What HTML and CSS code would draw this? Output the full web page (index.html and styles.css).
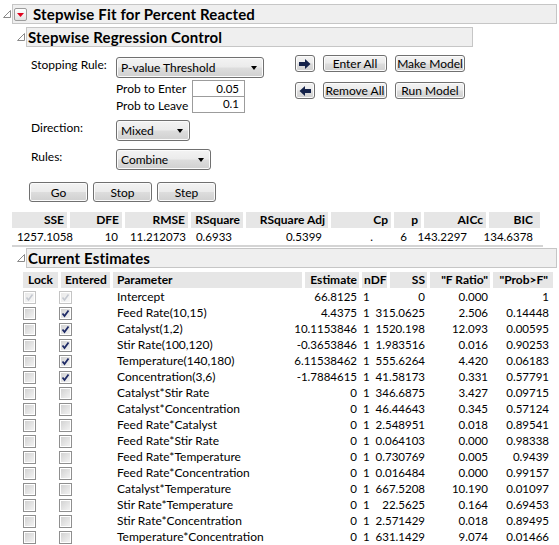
FILE: index.html
```html
<!DOCTYPE html>
<html>
<head>
<meta charset="utf-8">
<link rel="stylesheet" href="styles.css">
</head>
<body>
<div class="outline top">
  <div class="ohead">
    <svg class="tri" viewBox="0 0 8 8" width="8" height="8"><polygon points="0.5,7.5 7.5,7.5 7.5,0.5" fill="#fff" stroke="#8a8a8a" stroke-width="1"/></svg>
    <div class="obar title-bar">
      <span class="redbtn"><svg viewBox="0 0 13 13" width="13" height="13"><polygon points="3,5 10,5 6.5,9" fill="#e0001b"/></svg></span>
      <span class="otitle">Stepwise Fit for Percent Reacted</span>
    </div>
  </div>

  <div class="outline sub">
    <div class="ohead">
      <svg class="tri" viewBox="0 0 8 8" width="8" height="8"><polygon points="0.5,7.5 7.5,7.5 7.5,0.5" fill="#fff" stroke="#8a8a8a" stroke-width="1"/></svg>
      <div class="obar ctl-bar"><span class="otitle">Stepwise Regression Control</span></div>
    </div>
    <div class="control">
      <div class="ctl-left">
        <div class="crow">
          <span class="clabel">Stopping Rule:</span>
          <div class="combo c-stop">P-value Threshold<span class="carrow"></span></div>
        </div>
        <div class="probs">
          <span class="plabel">Prob to Enter</span><span class="pval">0.05</span>
          <span class="plabel">Prob to Leave</span><span class="pval second">0.1</span>
        </div>
        <div class="crow dir">
          <span class="clabel">Direction:</span>
          <div class="combo c-dir">Mixed<span class="carrow"></span></div>
        </div>
        <div class="crow rules">
          <span class="clabel">Rules:</span>
          <div class="combo c-rules">Combine<span class="carrow"></span></div>
        </div>
        <div class="btnrow">
          <div class="btn b-run">Go</div>
          <div class="btn b-run">Stop</div>
          <div class="btn b-run">Step</div>
        </div>
      </div>
      <div class="ctl-right">
        <div class="btn"><svg viewBox="0 0 12 10" width="12" height="10"><polygon points="0,3 6,3 6,0 11.5,5 6,10 6,7 0,7" fill="#14224a"/></svg></div>
        <div class="btn">Enter All</div>
        <div class="btn">Make Model</div>
        <div class="btn"><svg viewBox="0 0 12 10" width="12" height="10"><polygon points="12,3 6,3 6,0 0.5,5 6,10 6,7 12,7" fill="#14224a"/></svg></div>
        <div class="btn">Remove All</div>
        <div class="btn">Run Model</div>
      </div>
    </div>
  </div>

  <div class="stats">
    <div class="stats-head">
      <span>SSE</span><span>DFE</span><span>RMSE</span><span>RSquare</span><span>RSquare Adj</span><span>Cp</span><span>p</span><span>AICc</span><span class="last">BIC</span>
    </div>
    <div class="stats-vals">
      <span>1257.1058</span><span>10</span><span>11.212073</span><span>0.6933</span><span>0.5399</span><span>.</span><span>6</span><span>143.2297</span><span>134.6378</span>
    </div>
  </div>

  <div class="outline sub est">
    <div class="ohead">
      <svg class="tri" viewBox="0 0 8 8" width="8" height="8"><polygon points="0.5,7.5 7.5,7.5 7.5,0.5" fill="#fff" stroke="#8a8a8a" stroke-width="1"/></svg>
      <div class="obar est-bar"><span class="otitle">Current Estimates</span></div>
    </div>
    <div class="etable">
      <div class="ehead">
        <span class="h-lock">Lock</span><span class="h-ent">Entered</span><span class="h-par">Parameter</span><span class="h-r">Estimate</span><span class="h-ndf">nDF</span><span class="h-r">SS</span><span class="h-r">"F Ratio"</span><span class="h-r h-last">"Prob&gt;F"</span>
      </div>
      <div class="erow"><span class="cb dis"><svg viewBox="0 0 11 11" width="11" height="11"><path d="M2.5 5.5 L4.5 8 L8.5 2.5" fill="none" stroke="#c4c8d0" stroke-width="1.6"/></svg></span><span class="cb dis"><svg viewBox="0 0 11 11" width="11" height="11"><path d="M2.5 5.5 L4.5 8 L8.5 2.5" fill="none" stroke="#c4c8d0" stroke-width="1.6"/></svg></span><span class="par">Intercept</span><span class="num">66.8125</span><span class="ndf">1</span><span class="num">0</span><span class="num">0.000</span><span class="num">1</span></div>
      <div class="erow"><span class="cb"></span><span class="cb"><svg viewBox="0 0 11 11" width="11" height="11"><path d="M2.5 5.5 L4.5 8 L8.5 2.5" fill="none" stroke="#1e2a66" stroke-width="1.8"/></svg></span><span class="par">Feed Rate(10,15)</span><span class="num">4.4375</span><span class="ndf">1</span><span class="num">315.0625</span><span class="num">2.506</span><span class="num">0.14448</span></div>
      <div class="erow"><span class="cb"></span><span class="cb"><svg viewBox="0 0 11 11" width="11" height="11"><path d="M2.5 5.5 L4.5 8 L8.5 2.5" fill="none" stroke="#1e2a66" stroke-width="1.8"/></svg></span><span class="par">Catalyst(1,2)</span><span class="num">10.1153846</span><span class="ndf">1</span><span class="num">1520.198</span><span class="num">12.093</span><span class="num">0.00595</span></div>
      <div class="erow"><span class="cb"></span><span class="cb"><svg viewBox="0 0 11 11" width="11" height="11"><path d="M2.5 5.5 L4.5 8 L8.5 2.5" fill="none" stroke="#1e2a66" stroke-width="1.8"/></svg></span><span class="par">Stir Rate(100,120)</span><span class="num">-0.3653846</span><span class="ndf">1</span><span class="num">1.983516</span><span class="num">0.016</span><span class="num">0.90253</span></div>
      <div class="erow"><span class="cb"></span><span class="cb"><svg viewBox="0 0 11 11" width="11" height="11"><path d="M2.5 5.5 L4.5 8 L8.5 2.5" fill="none" stroke="#1e2a66" stroke-width="1.8"/></svg></span><span class="par">Temperature(140,180)</span><span class="num">6.11538462</span><span class="ndf">1</span><span class="num">555.6264</span><span class="num">4.420</span><span class="num">0.06183</span></div>
      <div class="erow"><span class="cb"></span><span class="cb"><svg viewBox="0 0 11 11" width="11" height="11"><path d="M2.5 5.5 L4.5 8 L8.5 2.5" fill="none" stroke="#1e2a66" stroke-width="1.8"/></svg></span><span class="par">Concentration(3,6)</span><span class="num">-1.7884615</span><span class="ndf">1</span><span class="num">41.58173</span><span class="num">0.331</span><span class="num">0.57791</span></div>
      <div class="erow"><span class="cb"></span><span class="cb"></span><span class="par">Catalyst*Stir Rate</span><span class="num">0</span><span class="ndf">1</span><span class="num">346.6875</span><span class="num">3.427</span><span class="num">0.09715</span></div>
      <div class="erow"><span class="cb"></span><span class="cb"></span><span class="par">Catalyst*Concentration</span><span class="num">0</span><span class="ndf">1</span><span class="num">46.44643</span><span class="num">0.345</span><span class="num">0.57124</span></div>
      <div class="erow"><span class="cb"></span><span class="cb"></span><span class="par">Feed Rate*Catalyst</span><span class="num">0</span><span class="ndf">1</span><span class="num">2.548951</span><span class="num">0.018</span><span class="num">0.89541</span></div>
      <div class="erow"><span class="cb"></span><span class="cb"></span><span class="par">Feed Rate*Stir Rate</span><span class="num">0</span><span class="ndf">1</span><span class="num">0.064103</span><span class="num">0.000</span><span class="num">0.98338</span></div>
      <div class="erow"><span class="cb"></span><span class="cb"></span><span class="par">Feed Rate*Temperature</span><span class="num">0</span><span class="ndf">1</span><span class="num">0.730769</span><span class="num">0.005</span><span class="num">0.9439</span></div>
      <div class="erow"><span class="cb"></span><span class="cb"></span><span class="par">Feed Rate*Concentration</span><span class="num">0</span><span class="ndf">1</span><span class="num">0.016484</span><span class="num">0.000</span><span class="num">0.99157</span></div>
      <div class="erow"><span class="cb"></span><span class="cb"></span><span class="par">Catalyst*Temperature</span><span class="num">0</span><span class="ndf">1</span><span class="num">667.5208</span><span class="num">10.190</span><span class="num">0.01097</span></div>
      <div class="erow"><span class="cb"></span><span class="cb"></span><span class="par">Stir Rate*Temperature</span><span class="num">0</span><span class="ndf">1</span><span class="num">22.5625</span><span class="num">0.164</span><span class="num">0.69453</span></div>
      <div class="erow"><span class="cb"></span><span class="cb"></span><span class="par">Stir Rate*Concentration</span><span class="num">0</span><span class="ndf">1</span><span class="num">2.571429</span><span class="num">0.018</span><span class="num">0.89495</span></div>
      <div class="erow"><span class="cb"></span><span class="cb"></span><span class="par">Temperature*Concentration</span><span class="num">0</span><span class="ndf">1</span><span class="num">631.1429</span><span class="num">9.074</span><span class="num">0.01466</span></div>
    </div>
  </div>
</div>
</body>
</html>
```

FILE: styles.css
```css
* { box-sizing: border-box; }

body {
  margin: 0;
  padding-top: 4px;
  width: 559px;
  height: 545px;
  overflow: hidden;
  background: #fff;
  color: #000;
  font-family: Lato, "Open Sans", sans-serif;
  font-size: 12px;
}

/* outline headers */
.ohead {
  display: flex;
  align-items: center;
  height: 20px;
}
.top > .ohead { padding-left: 3px; }
.sub > .ohead { padding-left: 17px; }
.tri { flex: none; margin-right: 1px; }

.obar {
  flex: none;
  height: 20px;
  display: flex;
  align-items: center;
  padding-left: 1px;
  border: 1px solid #c6c6c6;
  background: #efefef;
}
.otitle {
  font-weight: bold;
  font-size: 15px;
  letter-spacing: 0.15px;
  white-space: nowrap;
}
.title-bar { width: 545px; }
.ctl-bar { width: 447px; }
.est-bar { width: 531px; }

.redbtn {
  width: 13px;
  height: 13px;
  margin-right: 6px;
  border: 1px solid #9c9c9c;
  border-radius: 2px;
  background: linear-gradient(#ffffff, #e2e2e2);
  display: flex;
  align-items: center;
  justify-content: center;
  overflow: hidden;
}
.redbtn svg { flex: none; }

.sub { margin-top: 3px; }

/* control panel */
.control {
  display: flex;
  padding: 8px 0 0 31px;
}
.ctl-left {
  width: 233px;
  margin-top: 2px;
}
.crow {
  display: flex;
  align-items: flex-start;
}
.clabel {
  width: 85px;
  line-height: 16px;
  white-space: nowrap;
}
.combo {
  position: relative;
  height: 21px;
  padding-left: 4px;
  line-height: 19px;
  border: 1px solid #707070;
  border-radius: 3px;
  background: linear-gradient(#f3f3f3 0%, #ebebeb 48%, #dddddd 52%, #d0d0d0 100%);
  box-shadow: inset 0 0 0 1px #fbfbfb;
  white-space: nowrap;
}
.carrow {
  position: absolute;
  right: 6px;
  top: 8px;
  width: 0;
  height: 0;
  border-left: 3.5px solid transparent;
  border-right: 3.5px solid transparent;
  border-top: 4px solid #000;
}
.c-stop { width: 148px; }
.c-dir { width: 74px; }
.c-rules { width: 95px; }
.dir { margin-top: 7px; }
.rules { margin-top: 8px; }

.probs {
  display: grid;
  grid-template-columns: 76px 53px;
  grid-template-rows: 17px 16px;
  margin: 2px 0 0 85px;
}
.plabel {
  line-height: 17px;
  white-space: nowrap;
}
.pval {
  border: 1px solid #9c9c9c;
  background: #fff;
  text-align: right;
  padding-right: 5px;
  line-height: 15px;
  font-size: 11.5px;
}
.pval.second {
  border-top: none;
  line-height: 14px;
}

.btn {
  display: flex;
  align-items: center;
  justify-content: center;
  border: 1px solid #707070;
  border-radius: 3px;
  background: linear-gradient(#f3f3f3 0%, #ebebeb 48%, #dddddd 52%, #d0d0d0 100%);
  box-shadow: inset 0 0 0 1px #fbfbfb;
  white-space: nowrap;
}
.btnrow {
  display: flex;
  gap: 5px;
  margin: 12px 0 0 -2px;
}
.b-run { width: 59px; height: 20px; }

.ctl-right {
  display: grid;
  grid-template-columns: 20px 64px 70px;
  grid-template-rows: 17px 17px;
  column-gap: 8px;
  row-gap: 10px;
  margin-left: 31px;
  align-self: flex-start;
}

/* stats table */
.stats {
  width: 531px;
  margin: 10px 0 0 12px;
  border-bottom: 2px solid #d4d4d4;
}
.stats-head {
  display: grid;
  grid-template-columns: 55px 52px 63px 52px 82px 60px 27px 62px 51px;
  column-gap: 3px;
}
.stats-head span {
  background: #e6e6e6;
  font-weight: bold;
  text-align: right;
  padding-right: 3px;
  line-height: 16px;
  white-space: nowrap;
}
.stats-head span.last { padding-right: 7px; }
.stats-vals {
  display: grid;
  grid-template-columns: 64px 45px 68px 46px 90px 51px 34px 60px 66px;
}
.stats-vals span {
  text-align: right;
  padding-right: 3px;
  line-height: 17px;
  font-size: 11.5px;
  white-space: nowrap;
}

.est { margin-top: 1px; }

/* estimates table */
.etable {
  margin: 4px 0 0 23px;
}
.ehead {
  display: grid;
  grid-template-columns: 35px 49px 189px 54px 25px 37px 60px 60px;
  column-gap: 3px;
  margin-bottom: 1px;
}
.ehead span {
  background: #e6e6e6;
  font-weight: bold;
  line-height: 16px;
  white-space: nowrap;
}
.h-lock { padding-left: 5px; }
.h-ent { padding-left: 4px; }
.h-par { padding-left: 4px; }
.h-ndf { padding-left: 2px; }
.h-r { text-align: right; padding-right: 2px; }
.ehead span.h-last { padding-right: 5px; }

.erow {
  display: grid;
  grid-template-columns: 36px 58px 173px 67px 14px 54px 63px 61px;
  height: 16px;
  line-height: 16px;
  align-items: center;
  white-space: nowrap;
}
.cb {
  width: 13px;
  height: 13px;
  border: 1px solid #8f8f8f;
  background: linear-gradient(135deg, #cfcfcf, #f6f6f6);
  box-shadow: inset 0 0 0 1px #ffffff;
  display: flex;
  align-items: center;
  justify-content: center;
}
.cb svg { flex: none; }
.cb.dis {
  border-color: #c4c4c4;
  background: linear-gradient(135deg, #e8e8e8, #f8f8f8);
}
.num { text-align: right; font-size: 11.5px; }
.ndf { padding-left: 6px; font-size: 11.5px; }
```
